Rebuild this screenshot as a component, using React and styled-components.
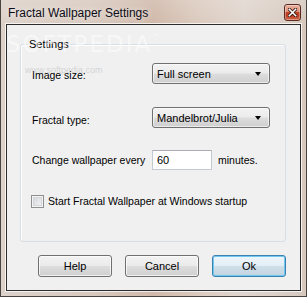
import React from 'react';
import styled, { createGlobalStyle } from 'styled-components';

const GlobalStyle = createGlobalStyle`
    html, body {
        margin: 0;
        padding: 0;
        background: #fff;
    }
    body {
        font-family: "Liberation Sans", Arial, sans-serif;
        font-size: 10.5px;
        color: #000;
    }
`;

function App() {
    return (
        <>
            <GlobalStyle />
            <Window>
                <TitleBar>
                    <Title>Fractal Wallpaper Settings</Title>
                    <CloseButton aria-label="Close">
                        <svg width="9" height="9" viewBox="0 0 9 9">
                            <path d="M1 1 L8 8 M8 1 L1 8" stroke="#3a1a12" strokeWidth="3.2" strokeLinecap="square" />
                            <path d="M1.3 1.3 L7.7 7.7 M7.7 1.3 L1.3 7.7" stroke="#fff" strokeWidth="1.6" strokeLinecap="square" />
                        </svg>
                    </CloseButton>
                </TitleBar>
                <Client>
                    <GroupBox>
                        <Legend>Settings</Legend>
                        <GroupBody>
                            <FieldRow $top={12}>
                                <Label $drop={3}>Image size:</Label>
                                <Select>
                                    <span>Full screen</span>
                                    <Arrow />
                                </Select>
                            </FieldRow>
                            <FieldRow $top={23}>
                                <Label $drop={4}>Fractal type:</Label>
                                <Select>
                                    <span>Mandelbrot/Julia</span>
                                    <Arrow />
                                </Select>
                            </FieldRow>
                            <FieldRow $top={22}>
                                <Label>Change wallpaper every</Label>
                                <Inline>
                                    <TextBox>60</TextBox>
                                    <span>minutes.</span>
                                </Inline>
                            </FieldRow>
                            <CheckRow>
                                <CheckBox />
                                <span>Start Fractal Wallpaper at Windows startup</span>
                            </CheckRow>
                        </GroupBody>
                    </GroupBox>
                    <ButtonBar>
                        <Button>Help</Button>
                        <Button>Cancel</Button>
                        <Button $primary>Ok</Button>
                    </ButtonBar>
                </Client>
                <Watermark>
                    SOFTPEDIA<sup>™</sup>
                </Watermark>
                <WatermarkUrl>www.softpedia.com</WatermarkUrl>
            </Window>
        </>
    );
}
export default App;

const Window = styled.div`
    position: relative;
    width: 307px;
    height: 297px;
    box-sizing: border-box;
    padding: 0 5px 5px 5px;
    border: 1px solid #4a4440;
    border-top: none;
    background:
        linear-gradient(180deg, rgba(255,255,255,0.15) 0%, rgba(255,255,255,0) 24px),
        linear-gradient(90deg, #ddd2ca 0%, #d8c9be 30%, #d0b9aa 50%, #dccbbf 65%, #e0d6cf 80%, #d6c8bd 100%);
    display: flex;
    flex-direction: column;
    overflow: hidden;
`;

const TitleBar = styled.div`
    height: 24px;
    display: flex;
    align-items: center;
    justify-content: space-between;
    padding: 0 0 1px 2px;
    box-sizing: border-box;
`;

const Title = styled.div`
    font-size: 12px;
    color: #0c0c18;
    text-shadow: 0 0 6px rgba(255,255,255,0.8);
    margin-top: 2px;
`;

const CloseButton = styled.div`
    width: 17px;
    height: 17px;
    box-sizing: border-box;
    margin-top: 2px;
    border: 1px solid #5b2a1e;
    border-radius: 3px;
    background: linear-gradient(180deg, #eab3a2 0%, #d98a72 45%, #c2452a 50%, #b8391f 70%, #d46a4c 100%);
    box-shadow: inset 0 0 0 1px rgba(255,255,255,0.35);
    display: flex;
    align-items: center;
    justify-content: center;
`;

const Client = styled.div`
    flex: 1;
    box-sizing: border-box;
    border: 1px solid #2c2c2c;
    box-shadow: 0 0 0 1px rgba(255,255,255,0.75);
    background: #f0f0f0;
    padding: 12px 14px 13px 13px;
    display: flex;
    flex-direction: column;
`;

const GroupBox = styled.fieldset`
    margin: 0;
    width: 266px;
    height: 205px;
    box-sizing: border-box;
    border: 1px solid #d5dfe5;
    border-radius: 3px;
    box-shadow: inset 1px 1px 0 #fff;
    padding: 0 0 0 11px;
    min-width: 0;
`;

const Legend = styled.legend`
    font-size: 11px;
    line-height: 14px;
    padding: 0 1px;
    margin-left: -4px;
`;

const GroupBody = styled.div`
    display: flex;
    flex-direction: column;
`;

const FieldRow = styled.div`
    display: grid;
    grid-template-columns: 120px auto;
    align-items: center;
    margin-top: ${(props) => props.$top}px;
`;

const Label = styled.span`
    white-space: nowrap;
    padding-top: ${(props) => props.$drop || 0}px;
`;

const Select = styled.div`
    width: 118px;
    height: 21px;
    box-sizing: border-box;
    border: 1px solid #707070;
    border-radius: 3px;
    background: linear-gradient(180deg, #f3f3f3 0%, #ebebeb 48%, #dddddd 52%, #cfcfcf 100%);
    box-shadow: inset 0 0 0 1px rgba(255,255,255,0.6);
    display: flex;
    align-items: center;
    justify-content: space-between;
    padding: 0 8px 0 4px;
    font-size: 11px;
`;

const Arrow = styled.i`
    width: 0;
    height: 0;
    border-left: 3.5px solid transparent;
    border-right: 3.5px solid transparent;
    border-top: 4px solid #000;
    margin-top: 1px;
`;

const Inline = styled.div`
    display: flex;
    align-items: center;
    gap: 6px;
`;

const TextBox = styled.div`
    width: 60px;
    height: 20px;
    box-sizing: border-box;
    border: 1px solid #c5cad0;
    border-top-color: #abadb3;
    background: #fff;
    padding: 0 4px;
    display: flex;
    align-items: center;
    font-size: 11px;
`;

const CheckRow = styled.div`
    display: flex;
    align-items: center;
    gap: 4px;
    margin-top: 24px;
    margin-left: -1px;
    height: 14px;
`;

const CheckBox = styled.div`
    width: 13px;
    height: 13px;
    box-sizing: border-box;
    border: 1px solid #8e8f8f;
    background: linear-gradient(135deg, #cbcfd5 0%, #e7e9ec 60%, #f4f4f4 100%);
    box-shadow: inset 0 0 0 1px #f4f4f4, inset 0 0 0 2px #d4d6d9;
`;

const ButtonBar = styled.div`
    display: flex;
    justify-content: flex-end;
    gap: 13px;
    margin-top: auto;
`;

const Button = styled.div`
    width: 74px;
    height: 22px;
    box-sizing: border-box;
    border: 1px solid ${(props) => (props.$primary ? '#3c7fb1' : '#707070')};
    border-radius: 3px;
    background: ${(props) =>
        props.$primary
            ? 'linear-gradient(180deg, #eef6fb 0%, #e3eef6 48%, #cfdfea 52%, #c3d4e0 100%)'
            : 'linear-gradient(180deg, #f2f2f2 0%, #ebebeb 48%, #dddddd 52%, #cfcfcf 100%)'};
    box-shadow: inset 0 0 0 1px ${(props) => (props.$primary ? '#6fc8f0' : 'rgba(255,255,255,0.7)')};
    display: flex;
    align-items: center;
    justify-content: center;
    font-size: 11px;
`;

const Watermark = styled.div`
    position: absolute;
    left: 5px;
    top: 31px;
    font-family: "DejaVu Sans", sans-serif;
    font-size: 23px;
    letter-spacing: 2px;
    color: rgba(255, 255, 255, 0.55);
    pointer-events: none;

    sup {
        font-size: 7px;
        vertical-align: top;
        position: relative;
        top: 2px;
    }
`;

const WatermarkUrl = styled.div`
    position: absolute;
    left: 24px;
    top: 65px;
    font-size: 9px;
    color: rgba(150, 150, 150, 0.35);
    pointer-events: none;
`;
